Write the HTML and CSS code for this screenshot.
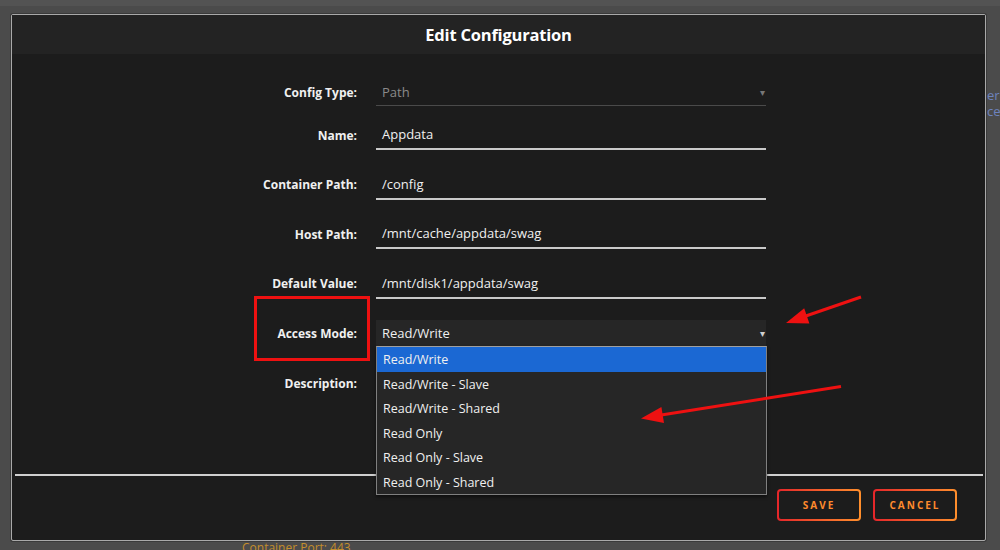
FILE: index.html
```html
<!DOCTYPE html>
<html lang="en">

<head>
    <meta charset="UTF-8">
    <meta name="viewport" content="width=device-width, initial-scale=1.0">
    <title>Edit Configuration</title>
    <link rel="stylesheet" href="styles.css">
</head>

<body>
    <div class="page">
        <div class="topbar"></div>
        <div class="behind">
            <p>er</p>
            <p>ce</p>
        </div>
        <p class="port">Container Port: 443</p>
    </div>

    <div class="modal">
        <div class="modal-head">Edit Configuration</div>
        <div class="modal-body">
            <div class="row first">
                <label>Config Type:</label>
                <div class="field disabled">Path<span class="caret">&#9662;</span></div>
            </div>
            <div class="row">
                <label>Name:</label>
                <div class="field">Appdata</div>
            </div>
            <div class="row">
                <label>Container Path:</label>
                <div class="field">/config</div>
            </div>
            <div class="row">
                <label>Host Path:</label>
                <div class="field">/mnt/cache/appdata/swag</div>
            </div>
            <div class="row">
                <label>Default Value:</label>
                <div class="field">/mnt/disk1/appdata/swag</div>
            </div>
            <div class="row access">
                <label>Access Mode:</label>
                <div class="field select">Read/Write<span class="caret">&#9662;</span>
                    <ul class="options">
                        <li class="picked">Read/Write</li>
                        <li>Read/Write - Slave</li>
                        <li>Read/Write - Shared</li>
                        <li>Read Only</li>
                        <li>Read Only - Slave</li>
                        <li>Read Only - Shared</li>
                    </ul>
                </div>
            </div>
            <div class="row desc">
                <label>Description:</label>
                <div class="field blank"></div>
            </div>
        </div>
        <div class="modal-foot">
            <button class="btn">SAVE</button>
            <button class="btn">CANCEL</button>
        </div>
    </div>

    <!-- annotations drawn on top of the screenshot -->
    <svg class="marks" width="1000" height="550" viewBox="0 0 1000 550">
        <rect x="255.5" y="297.5" width="113" height="62" fill="none" stroke="#ee1111" stroke-width="3" />
        <line x1="861" y1="297" x2="800" y2="318" stroke="#ee1111" stroke-width="3" />
        <polygon points="786,323 809.4,323.4 804.2,308.2" fill="#ee1111" />
        <line x1="841" y1="386.5" x2="655" y2="416" stroke="#ee1111" stroke-width="3" />
        <polygon points="641,418.5 664,422.9 661.4,407.1" fill="#ee1111" />
    </svg>
</body>

</html>
```

FILE: styles.css
```css
* {
    margin: 0;
    padding: 0;
    box-sizing: border-box;
}

html,
body {
    width: 1000px;
    height: 550px;
    overflow: hidden;
}

body {
    background-color: #4b4b4b;
    font-family: "Open Sans", "Noto Sans", sans-serif;
    color: #f0f0f0;
    position: relative;
}

.topbar {
    height: 6px;
    background-color: #535353;
}

.behind {
    margin-left: 987px;
    padding-top: 81px;
}

.behind p {
    font-size: 13px;
    line-height: 16px;
    color: #6d82bd;
    white-space: nowrap;
}

.port {
    margin-top: 421px;
    margin-left: 242px;
    font-size: 12px;
    line-height: 16px;
    color: #c48e2c;
}

.modal {
    position: absolute;
    top: 14px;
    left: 11px;
    width: 975px;
    height: 527px;
    background-color: #1c1c1c;
    border: 1px solid #a9a9a9;
    border-radius: 2px;
    box-shadow: 0 0 0 1px #3a3a3a;
    display: flex;
    flex-direction: column;
}

.modal-head {
    height: 39px;
    background-color: #232323;
    display: flex;
    align-items: center;
    justify-content: center;
    font-size: 16.5px;
    font-weight: 700;
    color: #ffffff;
    letter-spacing: -0.2px;
}

.modal-body {
    height: 420px;
    padding-top: 24px;
    display: flex;
    flex-direction: column;
    gap: 19.5px;
}

.row {
    display: grid;
    grid-template-columns: 345px 390px;
    column-gap: 19px;
    align-items: center;
}

.row label {
    text-align: right;
    font-size: 12px;
    font-weight: 700;
    color: #f0f0f0;
}

.row.first {
    margin-bottom: -5.5px;
}

.row.access {
    margin-top: 2px;
}

.row.desc {
    margin-top: 3px;
}

.field {
    position: relative;
    height: 30px;
    padding-left: 6px;
    display: flex;
    align-items: center;
    font-size: 13px;
    color: #f0f0f0;
    border-bottom: 2px solid #c9c9c9;
}

.field.disabled {
    height: 28px;
    color: #8a8a8a;
    border-bottom: 1px solid #4a4a4a;
}

.field.blank {
    border-bottom: none;
}

.field.select {
    height: 26px;
    background-color: #262626;
    border-bottom: none;
}

.caret {
    margin-left: auto;
    padding-right: 1px;
    font-size: 10px;
    color: #d0d0d0;
}

.disabled .caret {
    color: #777777;
}

.options {
    position: absolute;
    top: 100%;
    left: 0;
    width: 391px;
    list-style: none;
    background-color: #262626;
    border: 1px solid #808080;
    border-top-color: #a0a0a0;
    box-shadow: 0 2px 3px rgba(0, 0, 0, 0.5);
    z-index: 2;
}

.options li {
    height: 24.5px;
    padding-top: 2px;
    line-height: 22.5px;
    padding-left: 6px;
    font-size: 12.5px;
    color: #f0f0f0;
}

.options li.picked {
    background-color: #1b68d3;
}

.modal-foot {
    flex: 1;
    margin: 0 2px 0 3px;
    border-top: 2px solid #cfcfcf;
    padding: 13px 26px 0 0;
    display: flex;
    justify-content: flex-end;
    align-items: flex-start;
    gap: 12px;
}

.btn {
    width: 84px;
    height: 32px;
    border: 2px solid transparent;
    border-radius: 4px;
    background: linear-gradient(#1c1c1c, #1c1c1c) padding-box,
        linear-gradient(90deg, #e5262a, #ff8f2c) border-box;
    color: #ff8b2d;
    font-family: "Open Sans", "Noto Sans", sans-serif;
    font-size: 10px;
    font-weight: 700;
    letter-spacing: 2px;
}

.marks {
    position: absolute;
    top: 0;
    left: 0;
    z-index: 5;
    pointer-events: none;
}
```
